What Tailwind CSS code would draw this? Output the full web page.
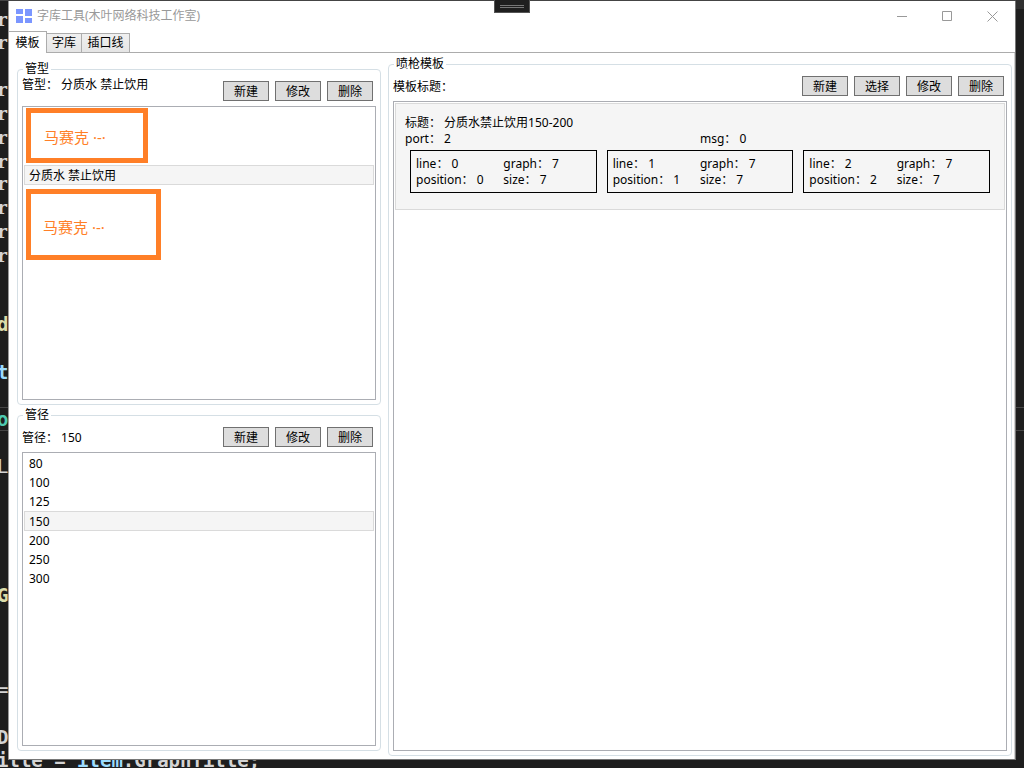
<!DOCTYPE html>
<html lang="zh-CN">
<head>
<meta charset="utf-8">
<title>字库工具(木叶网络科技工作室)</title>
<script src="https://cdn.jsdelivr.net/npm/@tailwindcss/browser@4"></script>
</head>
<body class="relative h-screen overflow-hidden bg-[#1e1e1e] px-2 pt-px pb-2 font-['Noto_Sans','Noto_Sans_CJK_SC',sans-serif] text-[12px] leading-4 text-black">

<!-- Code editor behind the window -->
<div aria-hidden="true" class="absolute inset-0 overflow-hidden font-['DejaVu_Sans_Mono',monospace] text-[19px] leading-6 font-bold text-[#d4d4d4]">
  <div class="absolute inset-x-0 top-0 h-px bg-[#444444]"></div>
  <div class="absolute top-0 right-0 h-[9px] w-2 bg-[#303030]"></div>
  <div class="absolute top-[407px] h-6 w-full border-y border-[#464646]"></div>
  <div class="absolute top-[7px] -left-[3px] font-['DejaVu_Serif',serif]">r</div>
  <div class="absolute top-[30px] -left-[3px] font-['DejaVu_Serif',serif]">r</div>
  <div class="absolute top-[77px] -left-[3px] font-['DejaVu_Serif',serif]">r<br>r<br>r<br>r</div>
  <div class="absolute top-[171px] -left-[3px] font-['DejaVu_Serif',serif]">r<br>r<br>r<br>r</div>
  <div class="absolute top-[312px] -left-[3px] text-[#dcdcaa]">d</div>
  <div class="absolute top-[360px] -left-[3px] text-[#9cdcfe]">t</div>
  <div class="absolute top-[407px] -left-[3px] text-[#4ec9b0]">o</div>
  <div class="absolute top-[454px] -left-[3px] font-normal">L</div>
  <div class="absolute top-[583px] -left-[3px] text-[#dcdcaa]">G</div>
  <div class="absolute top-[677px] -left-[3px] font-normal">=</div>
  <div class="absolute top-[725px] -left-[3px]">D</div>
  <div class="absolute top-[748px] -left-[3px] whitespace-pre">itle = <span class="text-[#9cdcfe]">item</span>.GraphTitle;</div>
</div>

<main class="relative flex h-full flex-col border border-t-0 border-[#777777] border-l-[#999999] bg-white">
  <header class="flex h-[30px] shrink-0 items-center pl-[7px] text-[#999999]">
    <svg class="mr-[5px] h-[15px] w-4 shrink-0" viewBox="0 0 16 15" fill="#7b96ff" aria-hidden="true">
      <path d="M0 0h7v5H0zM9 0h7v7H9zM0 7h7v7H0zM9 9h7v5H9z"/>
    </svg>
    <h1 class="flex-1">字库工具(木叶网络科技工作室)</h1>
    <button aria-label="最小化" class="flex h-full w-[45px] items-center justify-center"><svg class="h-[11px] w-[11px]" viewBox="0 0 11 11" stroke="#999" fill="none"><path d="M0 5.5h10"/></svg></button>
    <button aria-label="最大化" class="flex h-full w-[45px] items-center justify-center"><svg class="h-[11px] w-[11px]" viewBox="0 0 11 11" stroke="#999" fill="none"><path d="M.5.5h9v9h-9z"/></svg></button>
    <button aria-label="关闭" class="flex h-full w-[45px] items-center justify-center"><svg class="h-[11px] w-[11px]" viewBox="0 0 11 11" stroke="#999" fill="none"><path d="M.5.5l10 10M10.5.5l-10 10"/></svg></button>
  </header>

  <nav role="tablist" class="flex h-[22px] shrink-0 items-end">
    <button role="tab" aria-selected="true" class="h-[22px] w-[38px] border border-b-0 border-l-0 border-[#acacac] bg-white">模板</button>
    <button role="tab" aria-selected="false" class="h-5 w-[35px] border border-l-0 border-[#acacac] bg-linear-to-b from-[#f0f0f0] to-[#e5e5e5]">字库</button>
    <button role="tab" aria-selected="false" class="h-5 w-12 border border-l-0 border-[#acacac] bg-linear-to-b from-[#f0f0f0] to-[#e5e5e5]">插口线</button>
    <div class="flex-1 border-b border-[#acacac]"></div>
  </nav>

  <div class="grid min-h-0 flex-1 grid-cols-[364fr_624fr] gap-[7px] border-r border-[#d0d0d0] pt-[3px] pr-[2px] pb-[3px] pl-2">
    <div class="flex min-h-0 min-w-0 flex-col gap-[2px] pt-[5px] pb-[5px]">
      <fieldset class="min-h-0 min-w-0 flex-1 rounded-[4px] border border-[#d5dfe5] px-1 pb-1">
        <legend class="ml-[1px] px-[2px]">管型</legend>
        <div class="flex h-full flex-col">
          <div class="mb-[5px] flex h-6 items-end justify-between pr-[3px]">
            <p class="self-start">管型： 分质水 禁止饮用</p>
            <div class="flex gap-[6px]">
              <button class="h-5 w-[46px] border border-[#707070] bg-[#dddddd] pt-px leading-[18px]">新建</button>
              <button class="h-5 w-[46px] border border-[#707070] bg-[#dddddd] pt-px leading-[18px]">修改</button>
              <button class="h-5 w-[46px] border border-[#707070] bg-[#dddddd] pt-px leading-[18px]">删除</button>
            </div>
          </div>
          <ul role="listbox" aria-label="管型" class="min-h-0 flex-1 border border-[#abadb3] px-px pt-px">
            <li role="option" class="ml-[2px] flex h-[55px] w-[122px] items-center border-[5px] border-[#ff7f27] pt-[2px] pl-[13px] text-[15px] text-[#ff7f27]">马赛克 ·-·</li>
            <li role="option" aria-selected="true" class="mt-[2px] flex h-5 items-center border border-[#dadada] bg-[#f5f5f5] px-1 pt-[2px]">分质水 禁止饮用</li>
            <li role="option" class="mt-1 ml-[2px] flex h-[71px] w-[135px] items-center border-[5px] border-[#ff7f27] pt-1 pl-3 text-[15px] text-[#ff7f27]">马赛克 ·-·</li>
          </ul>
        </div>
      </fieldset>
      <fieldset class="min-h-0 min-w-0 flex-1 rounded-[4px] border border-[#d5dfe5] px-1 pb-1">
        <legend class="ml-[1px] px-[2px]">管径</legend>
        <div class="flex h-full flex-col">
          <div class="mb-[5px] flex h-6 items-end justify-between pr-[3px]">
            <p class="leading-[18px]">管径： 150</p>
            <div class="flex gap-[6px]">
              <button class="h-5 w-[46px] border border-[#707070] bg-[#dddddd] pt-px leading-[18px]">新建</button>
              <button class="h-5 w-[46px] border border-[#707070] bg-[#dddddd] pt-px leading-[18px]">修改</button>
              <button class="h-5 w-[46px] border border-[#707070] bg-[#dddddd] pt-px leading-[18px]">删除</button>
            </div>
          </div>
          <ul role="listbox" aria-label="管径" class="min-h-0 flex-1 border border-[#abadb3] px-px pt-px leading-[19px]">
            <li role="option" class="px-[5px]">80</li>
            <li role="option" class="px-[5px]">100</li>
            <li role="option" class="px-[5px]">125</li>
            <li role="option" aria-selected="true" class="h-5 border border-[#dadada] bg-[#f5f5f5] px-1 leading-5">150</li>
            <li role="option" class="px-[5px]">200</li>
            <li role="option" class="px-[5px]">250</li>
            <li role="option" class="px-[5px]">300</li>
          </ul>
        </div>
      </fieldset>
    </div>

    <fieldset class="min-h-0 min-w-0 rounded-[4px] border border-[#d5dfe5] px-1 pb-1">
      <legend class="ml-[1px] px-[2px]">喷枪模板</legend>
      <div class="flex h-full flex-col">
        <div class="mb-[5px] flex h-6 items-end justify-between pr-[3px]">
          <p class="leading-[18px]">模板标题：</p>
          <div class="flex gap-[6px]">
            <button class="h-5 w-[46px] border border-[#707070] bg-[#dddddd] pt-px leading-[18px]">新建</button>
            <button class="h-5 w-[46px] border border-[#707070] bg-[#dddddd] pt-px leading-[18px]">选择</button>
            <button class="h-5 w-[46px] border border-[#707070] bg-[#dddddd] pt-px leading-[18px]">修改</button>
            <button class="h-5 w-[46px] border border-[#707070] bg-[#dddddd] pt-px leading-[18px]">删除</button>
          </div>
        </div>
        <ul role="listbox" aria-label="喷枪模板" class="min-h-0 flex-1 border border-[#abadb3] px-px pt-px">
          <li role="option" aria-selected="true" class="border border-[#dadada] bg-[#f5f5f5] px-[9px] pt-[11px] pb-4">
            <p>标题： 分质水禁止饮用150-200</p>
            <div class="grid grid-cols-2"><span>port： 2</span><span>msg： 0</span></div>
            <div class="mt-[3px] grid grid-cols-3 gap-[10px] px-[5px]">
              <div class="grid grid-cols-2 border border-black px-[5px] pt-[5px] pb-1 whitespace-nowrap"><span>line： 0</span><span>graph： 7</span><span>position： 0</span><span>size： 7</span></div>
              <div class="grid grid-cols-2 border border-black px-[5px] pt-[5px] pb-1 whitespace-nowrap"><span>line： 1</span><span>graph： 7</span><span>position： 1</span><span>size： 7</span></div>
              <div class="grid grid-cols-2 border border-black px-[5px] pt-[5px] pb-1 whitespace-nowrap"><span>line： 2</span><span>graph： 7</span><span>position： 2</span><span>size： 7</span></div>
            </div>
          </li>
        </ul>
      </div>
    </fieldset>
  </div>
</main>

<!-- Debug toolbar handle, docked over the title bar -->
<div class="absolute top-0 left-1/2 flex h-[13px] w-9 -translate-x-1/2 flex-col items-center justify-center gap-px border border-t-0 border-[#555555] bg-[#1f1f1f]">
  <div class="h-px w-6 bg-[#777777]"></div>
  <div class="h-px w-6 bg-[#777777]"></div>
</div>
</body>
</html>
